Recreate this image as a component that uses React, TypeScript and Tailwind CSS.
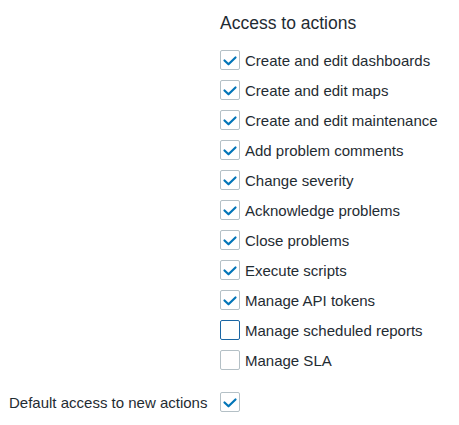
import { useState } from 'react'

const actions: { label: string; checked: boolean; focused?: boolean }[] = [
  { label: 'Create and edit dashboards', checked: true },
  { label: 'Create and edit maps', checked: true },
  { label: 'Create and edit maintenance', checked: true },
  { label: 'Add problem comments', checked: true },
  { label: 'Change severity', checked: true },
  { label: 'Acknowledge problems', checked: true },
  { label: 'Close problems', checked: true },
  { label: 'Execute scripts', checked: true },
  { label: 'Manage API tokens', checked: true },
  { label: 'Manage scheduled reports', checked: false, focused: true },
  { label: 'Manage SLA', checked: false },
]

function Checkbox({ checked, focused, onClick }: { checked: boolean; focused?: boolean; onClick: () => void }) {
  return (
    <button
      type="button"
      onClick={onClick}
      className={`w-5 h-5 shrink-0 rounded-[2px] bg-white flex items-center justify-center border ${
        focused ? 'border-[#1a66a4]' : 'border-[#b4c0c6]'
      }`}
    >
      {checked && (
        <svg width="18" height="18" viewBox="0 0 18 18" fill="none">
          <polyline
            points="3.5,9.5 7.5,13.3 14.5,6.5"
            stroke="#0275b8"
            strokeWidth="2.2"
            strokeLinecap="round"
            strokeLinejoin="round"
          />
        </svg>
      )}
    </button>
  )
}

export default function App() {
  const [state, setState] = useState(actions.map((a) => a.checked))
  const [defaultAccess, setDefaultAccess] = useState(true)

  return (
    <div className="w-[459px] h-[425px] bg-white text-[#1f2c33] font-['Liberation_Sans',Arial,sans-serif]">
      <div className="grid grid-cols-[220px_1fr]">
        <div />
        <div className="pt-[13px]">
          <div className="text-[17.5px] leading-[20px]">Access to actions</div>
          <div className="mt-[17px] flex flex-col gap-[10px]">
            {actions.map((a, i) => (
              <label key={a.label} className="flex items-center gap-[5px] h-5">
                <Checkbox
                  checked={state[i]}
                  focused={a.focused}
                  onClick={() => setState((s) => s.map((v, j) => (j === i ? !v : v)))}
                />
                <span className="text-[15px] leading-[20px] pt-[1px]">{a.label}</span>
              </label>
            ))}
          </div>
        </div>

        {/* Default access row */}
        <div className="mt-[22px] h-5 flex items-center pl-[9px]">
          <span className="text-[15px] leading-[20px] pt-[1px]">Default access to new actions</span>
        </div>
        <div className="mt-[22px] h-5 flex items-center">
          <Checkbox checked={defaultAccess} onClick={() => setDefaultAccess((v) => !v)} />
        </div>
      </div>
    </div>
  )
}
